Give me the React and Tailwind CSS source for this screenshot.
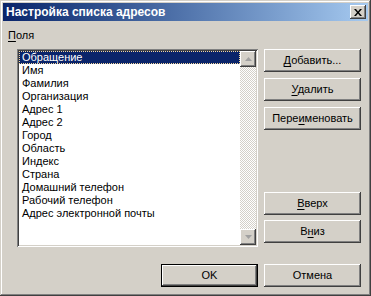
import React from 'react';

const fields = [
  'Обращение',
  'Имя',
  'Фамилия',
  'Организация',
  'Адрес 1',
  'Адрес 2',
  'Город',
  'Область',
  'Индекс',
  'Страна',
  'Домашний телефон',
  'Рабочий телефон',
  'Адрес электронной почты',
];

const raised =
  'shadow-[inset_-1px_-1px_#404040,inset_1px_1px_#ffffff,inset_-2px_-2px_#808080,inset_2px_2px_#d4d0c8]';

const Btn = ({ children, isDefault, className = '' }) => (
  <div className={`h-[23px] w-[97px] ${isDefault ? 'border border-black' : ''} ${className}`}>
    <div className={`flex h-full w-full items-center justify-center bg-[#d4d0c8] text-[11px] text-black ${raised}`}>
      {children}
    </div>
  </div>
);

const U = ({ children }) => <span className="underline underline-offset-2">{children}</span>;

const Arrow = ({ up }) => (
  <div className={`flex h-[16px] w-[16px] items-center justify-center bg-[#d4d0c8] ${raised}`}>
    <svg width="7" height="4" viewBox="0 0 7 4">
      {up ? <path d="M0 4 L3.5 0 L7 4 Z" fill="#a0a0a0" /> : <path d="M0 0 L3.5 4 L7 0 Z" fill="#a0a0a0" />}
    </svg>
  </div>
);

export default function App() {
  return (
    <div
      className="flex h-[296px] w-[371px] flex-col bg-[#d4d0c8] p-[3px] shadow-[inset_-1px_-1px_#404040,inset_1px_1px_#d4d0c8,inset_-2px_-2px_#808080,inset_2px_2px_#ffffff]"
      style={{ fontFamily: '"Liberation Sans", Arial, sans-serif' }}
    >
      {/* title bar */}
      <div className="flex h-[18px] items-center justify-between bg-gradient-to-r from-[#0a246a] to-[#a6caf0] pl-[3px] pr-[2px]">
        <span className="text-[12px] font-bold text-white">Настройка списка адресов</span>
        <div className={`flex h-[14px] w-[16px] items-center justify-center bg-[#d4d0c8] ${raised}`}>
          <svg width="8" height="7" viewBox="0 0 8 7">
            <path d="M0 0 L2 0 L4 2.5 L6 0 L8 0 L5 3.5 L8 7 L6 7 L4 4.5 L2 7 L0 7 L3 3.5 Z" fill="#000" />
          </svg>
        </div>
      </div>

      <div className="ml-[5px] mt-[8px] text-[11px] leading-[13px] text-black">
        <U>П</U>оля
      </div>

      <div className="mt-[7px] flex">
        {/* list box */}
        <div className="ml-[14px] flex h-[198px] w-[241px] bg-white p-[2px] shadow-[inset_1px_1px_#808080,inset_-1px_-1px_#ffffff,inset_2px_2px_#404040,inset_-2px_-2px_#d4d0c8]">
          <div className="flex-1 pt-[0px]">
            {fields.map((f, i) => (
              <div
                key={f}
                className={`h-[13px] pl-[3px] text-[11px] leading-[13px] ${
                  i === 0 ? 'bg-[#0a246a] text-white outline-1 outline-dotted outline-offset-[-1px] outline-[#f5d79c]' : 'text-black'
                }`}
              >
                {f}
              </div>
            ))}
          </div>
          <div className="flex w-[16px] flex-col justify-between bg-[image:repeating-conic-gradient(#d4d0c8_0%_25%,#ffffff_0%_50%)] bg-[length:2px_2px]">
            <Arrow up />
            <Arrow />
          </div>
        </div>

        {/* side buttons */}
        <div className="ml-[6px] flex flex-col">
          <Btn className="mt-[0px]">
            <span><U>Д</U>обавить...</span>
          </Btn>
          <Btn className="mt-[6px]">
            <span><U>У</U>далить</span>
          </Btn>
          <Btn className="mt-[6px]">
            <span>Пере<U>и</U>меновать</span>
          </Btn>
          <Btn className="mt-[62px]">
            <span><U>В</U>верх</span>
          </Btn>
          <Btn className="mt-[5px]">
            <span>В<U>н</U>из</span>
          </Btn>
        </div>
      </div>

      <div className="mt-[17px] flex justify-end gap-[6px] pr-[7px]">
        <Btn isDefault>OK</Btn>
        <Btn>Отмена</Btn>
      </div>
    </div>
  );
}
